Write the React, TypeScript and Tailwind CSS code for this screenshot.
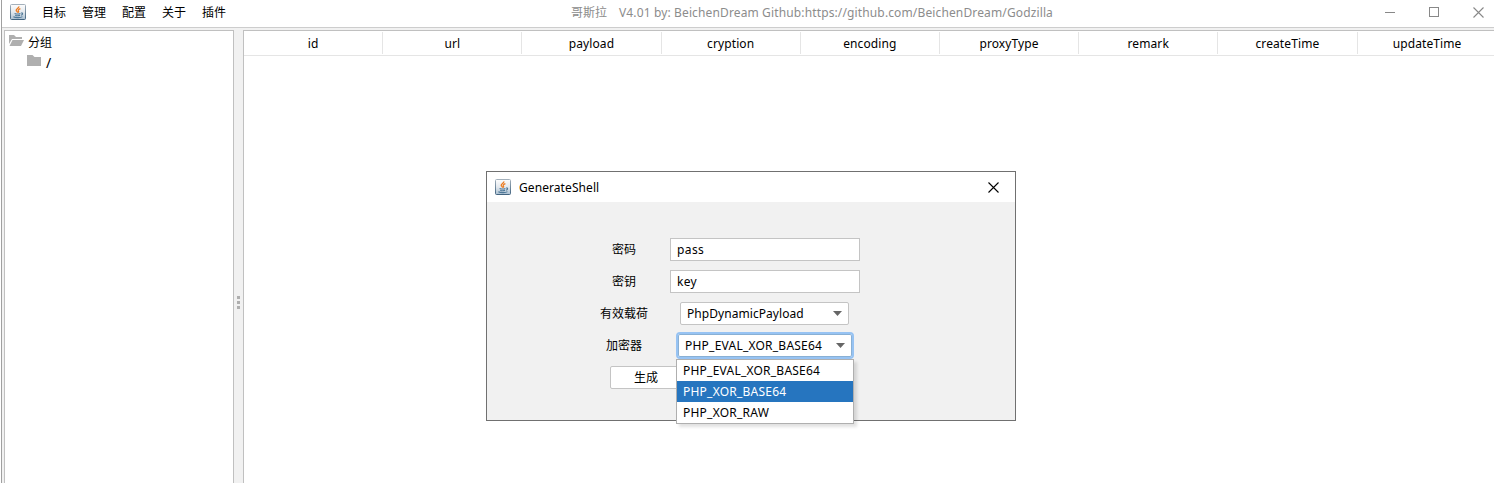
import React from "react";

const menus = ["目标", "管理", "配置", "关于", "插件"];

const columns = [
  "id",
  "url",
  "payload",
  "cryption",
  "encoding",
  "proxyType",
  "remark",
  "createTime",
  "updateTime",
];

const options = ["PHP_EVAL_XOR_BASE64", "PHP_XOR_BASE64", "PHP_XOR_RAW"];

function JavaIcon() {
  return (
    <svg width="16" height="16" viewBox="0 0 16 16" className="block shrink-0">
      <defs>
        <linearGradient id="tile" x1="0" y1="0" x2="0" y2="1">
          <stop offset="0" stopColor="#fdfdfd" />
          <stop offset="0.5" stopColor="#e4e9ee" />
          <stop offset="1" stopColor="#a9bfd1" />
        </linearGradient>
        <linearGradient id="rim" x1="0" y1="0" x2="0" y2="1">
          <stop offset="0" stopColor="#a3b0bb" />
          <stop offset="1" stopColor="#426480" />
        </linearGradient>
      </defs>
      <rect x="0.5" y="0.5" width="15" height="15" rx="1" fill="url(#tile)" stroke="url(#rim)" />
      <path d="M8.9 2.4C9.2 4 6 4.8 6.2 6.3C6.4 7.2 7.5 7.6 7.6 8.6M10.4 4.6C8.7 5.2 7.9 5.9 8.4 6.8C8.8 7.4 8.6 8 8.2 8.5" fill="none" stroke="#ec7c22" strokeWidth="1.3" />
      <path d="M4.6 9.4C6.2 10 9.2 10 10.4 9.4M5.2 11.2C7 11.9 9 11.8 10.1 11.2M11 9C13.2 8.6 13 10.6 11.1 11.2M3.4 12.8C5.6 14 10.8 13.9 12.4 12.6" fill="none" stroke="#4f7898" strokeWidth="1.1" />
    </svg>
  );
}

function OpenFolder() {
  return (
    <svg width="16" height="12" viewBox="0 0 16 12" className="block shrink-0">
      <path d="M0 0H5L7 2H13V4H3L0 9Z" fill="#afafaf" />
      <path d="M3.5 5H15L12 11H0.5Z" fill="#afafaf" />
    </svg>
  );
}

function Folder() {
  return (
    <svg width="14" height="11" viewBox="0 0 14 11" className="block shrink-0">
      <path d="M0 0H5.5L7.5 2H14V11H0Z" fill="#afafaf" />
    </svg>
  );
}

function Cross({ color }: { color: string }) {
  return (
    <svg width="11" height="11" viewBox="0 0 11 11" className="block shrink-0">
      <path d="M0.5 0.5L10.5 10.5M10.5 0.5L0.5 10.5" stroke={color} strokeWidth="1.1" />
    </svg>
  );
}

function Arrow() {
  return (
    <svg width="9" height="5" viewBox="0 0 9 5" className="block shrink-0">
      <path d="M0 0H9L4.5 5Z" fill="#666666" />
    </svg>
  );
}

function TitleBar() {
  return (
    <header className="flex h-7 shrink-0 items-center border-b border-[#cdcdcd] bg-white pb-[3px] pl-2">
      <JavaIcon />
      <nav className="ml-4 flex w-[185px] gap-4 pt-0.5">
        {menus.map((m) => (
          <span key={m} className="w-6">{m}</span>
        ))}
      </nav>
      <div className="ml-[344px] flex whitespace-pre pt-0.5 text-[#8c8c8c]">
        <span className="w-12">哥斯拉</span>
        <span className="tracking-[0.133px]">V4.01 by: BeichenDream Github:https://github.com/BeichenDream/Godzilla</span>
      </div>
      <div className="ml-auto flex items-center gap-[34px] pr-2.5">
        <span className="h-px w-2.5 bg-[#888]" />
        <span className="h-2.5 w-2.5 border border-[#888]" />
        <Cross color="#888" />
      </div>
    </header>
  );
}

function Label({ children }: { children: React.ReactNode }) {
  return <span className="w-[74px] pt-px text-center">{children}</span>;
}

function GenerateDialog() {
  return (
    <section className="absolute left-[486px] top-[171px] flex h-[250px] w-[530px] flex-col border border-[#707070] bg-[#f1f1f1]">
      <div className="flex h-[30px] shrink-0 items-center bg-white pl-2 pr-4">
        <JavaIcon />
        <span className="ml-2 pt-0.5 tracking-[0.08px]">GenerateShell</span>
        <span className="ml-auto">
          <Cross color="#000" />
        </span>
      </div>
      <form className="flex flex-col gap-[9px] pl-[100px] pt-9">
        <div className="flex h-[23px] items-center">
          <Label>密码</Label>
          <span className="ml-[9px] flex h-[23px] w-[190px] items-center border border-[#c4c4c4] bg-white pl-1.5 pt-px tracking-[0.4px]">pass</span>
        </div>
        <div className="flex h-[23px] items-center">
          <Label>密钥</Label>
          <span className="ml-[9px] flex h-[23px] w-[190px] items-center border border-[#c4c4c4] bg-white pl-1.5 pt-px tracking-[0.3px]">key</span>
        </div>
        <div className="flex h-[23px] items-center">
          <Label>有效载荷</Label>
          <span className="ml-[19px] flex h-[23px] w-[169px] items-center justify-between rounded-xs border border-[#c4c4c4] bg-white px-1.5 tracking-[0.06px]">
            <span className="pt-px">PhpDynamicPayload</span>
            <Arrow />
          </span>
        </div>
        <div className="flex h-[23px] items-center">
          <Label>加密器</Label>
          <div className="relative ml-[15px]">
            <span className="flex h-[27px] w-[178px] items-center justify-between rounded border-2 border-[#97c3f3] bg-white px-[7px] tracking-[0.23px] shadow-[inset_0_0_0_1px_#89b0d4]">
              <span className="pt-px">PHP_EVAL_XOR_BASE64</span>
              <Arrow />
            </span>
            <ul className="absolute left-0 top-[27px] z-10 w-[178px] border border-[#afafaf] bg-white tracking-[0.23px] shadow-[3px_3px_3px_rgba(0,0,0,0.12)]">
              {options.map((o, i) => (
                <li key={o} className={i === 1 ? "flex h-[21px] items-center bg-[#2675bf] pl-1.5 text-white" : "flex h-[21px] items-center pl-1.5"}>
                  {o}
                </li>
              ))}
            </ul>
          </div>
        </div>
        <span className="ml-[23px] flex h-[23px] w-[72px] items-center justify-center rounded-xs border border-[#c4c4c4] bg-white pt-px">生成</span>
      </form>
    </section>
  );
}

export default function App() {
  return (
    <div className="relative flex h-[483px] w-[1494px] flex-col overflow-hidden bg-white pl-px font-['Noto_Sans','Noto_Sans_CJK_SC',sans-serif] text-[12px] leading-4 text-black">
      <div className="flex grow flex-col border-l border-[#a0a0a0] bg-[#f1f1f1]">
        <TitleBar />
        <div className="flex grow pl-0.5 pt-0.5">
          <aside className="flex w-[230px] shrink-0 flex-col border-x border-t border-[#c0c0c0] bg-white">
            <div className="flex h-5 items-center gap-[3px] pl-1">
              <OpenFolder />
              <span className="pt-[3px]">分组</span>
            </div>
            <div className="flex h-5 items-start gap-[5px] pl-[22px] pt-1">
              <Folder />
              <span className="text-[14px]">/</span>
            </div>
          </aside>
          <div className="flex w-[9px] shrink-0 flex-col items-center justify-center gap-0.5 pt-[92px]">
            <i className="h-[3px] w-[3px] bg-[#afafaf]" />
            <i className="h-[3px] w-[3px] bg-[#afafaf]" />
            <i className="h-[3px] w-[3px] bg-[#afafaf]" />
          </div>
          <main className="w-[1251px] shrink-0 overflow-hidden border-l border-t border-[#c0c0c0] bg-white">
            <div className="-ml-px flex h-[25px] border-b border-[#e5e5e5] pl-px pt-px">
              {columns.map((name, i) => (
                <div key={name} className={i < 8 ? "flex h-[22px] w-[139.2px] shrink-0 items-center justify-center border-r border-[#e5e5e5] pt-0.5 tracking-[0.1px]" : "flex h-[22px] w-[139.2px] shrink-0 items-center justify-center pt-0.5 tracking-[0.1px]"}>
                  {name}
                </div>
              ))}
            </div>
          </main>
        </div>
      </div>
      <GenerateDialog />
    </div>
  );
}
